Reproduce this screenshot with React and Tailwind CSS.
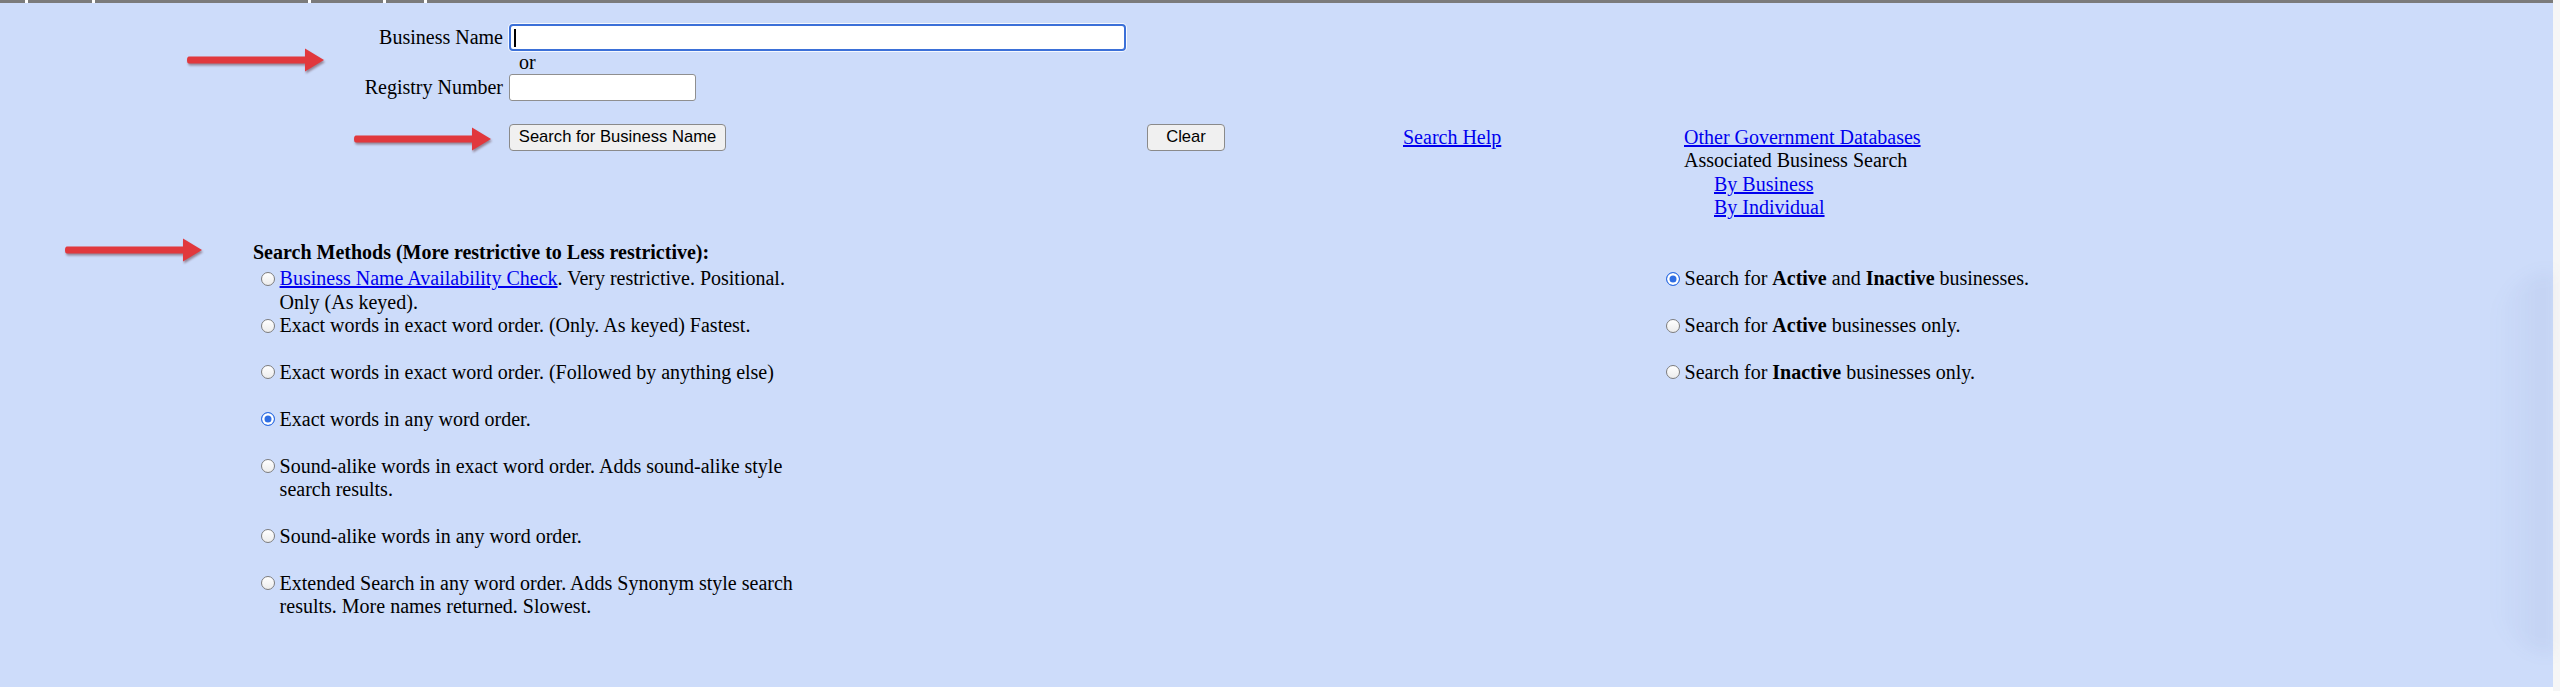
import React from "react";

const serif = "font-['Liberation_Serif','Times_New_Roman',serif]";
const sans = "font-['Liberation_Sans',Arial,sans-serif]";

function Arrow({ className }) {
  return (
    <svg
      className={`absolute w-[137px] h-[24px] drop-shadow-[1px_2px_1px_rgba(60,0,0,0.4)] ${className}`}
      viewBox="0 0 137 24"
    >
      <path d="M2 8.5 H118 V0.5 L137 12 L118 23.5 V15.5 H2 Q0 15.5 0 12 Q0 8.5 2 8.5 Z" fill="#e1383d" />
    </svg>
  );
}

function Radio({ checked }) {
  return (
    <span
      className={`block w-[14px] h-[14px] rounded-full border ${
        checked
          ? "border-[#2f6ee3] bg-[#2f6ee3] shadow-[inset_0_0_0_2.5px_#ffffff]"
          : "border-[#7d7d7d] bg-gradient-to-b from-white to-[#ececec]"
      }`}
    />
  );
}

function Option({ checked, gap, children }) {
  return (
    <div className={`flex items-start ${gap ? "mb-[23.4px]" : ""}`}>
      <div className="w-[18.6px] shrink-0 pt-[4.5px]">
        <Radio checked={checked} />
      </div>
      <div className="leading-[23.4px] whitespace-nowrap">{children}</div>
    </div>
  );
}

function Link({ children }) {
  return <a className="text-[#0000ee] underline cursor-pointer">{children}</a>;
}

export default function App() {
  const tabs = [25, 64, 213, 72, 38];

  return (
    <div className={`relative w-[2560px] h-[691px] bg-white flex overflow-hidden text-black text-[20px] ${serif}`}>
      <div className="w-[2553px] flex flex-col">
        <div className="h-[3px] flex gap-[3px] bg-white">
          {tabs.map((w, i) => (
            <div key={i} className="h-full bg-[#7b7b7b]" style={{ width: w }} />
          ))}
          <div className="h-full flex-1 bg-[#7b7b7b]" />
        </div>

        <div className="relative h-[684px] bg-[#cddcfa] pt-[21px]">
          {/* name / registry lookup */}
          <div className="grid grid-cols-[503px_auto] gap-x-[6px] leading-[23.4px]">
            <div className="self-center text-right">Business Name</div>
            <div className="w-[617px] h-[27px] border-2 border-[#3b70d8] rounded-[4px] bg-white flex items-center pl-[3px] shadow-[0_0_0_1px_rgba(255,255,255,0.8)]">
              <span className="block w-[2px] h-[18px] bg-black" />
            </div>

            <div />
            <div className="h-[23px] leading-[23px] pl-[10px]">or</div>

            <div className="self-center text-right">Registry Number</div>
            <div className="w-[187px] h-[27px] border border-[#8f8f8f] rounded-[3px] bg-white" />
          </div>

          <div className="mt-[23px] grid grid-cols-[503px_auto] gap-x-[6px] leading-[23.4px]">
            <div />
            <div className="flex items-start">
              <div className="w-[638px]">
                <button
                  type="button"
                  className={`w-[217px] h-[27px] border border-[#8a8a8a] rounded-[4px] bg-[#f0f0f0] text-[16.6px] leading-none ${sans}`}
                >
                  Search for Business Name
                </button>
              </div>
              <div className="w-[256px]">
                <button
                  type="button"
                  className={`w-[78px] h-[27px] border border-[#8a8a8a] rounded-[4px] bg-[#f0f0f0] text-[16.6px] leading-none ${sans}`}
                >
                  Clear
                </button>
              </div>
              <div className="w-[281px] pt-[2px]">
                <Link>Search Help</Link>
              </div>
              <div className="pt-[2px] flex flex-col items-start">
                <Link>Other Government Databases</Link>
                <div>Associated Business Search</div>
                <div className="pl-[30px] flex flex-col items-start">
                  <Link>By Business</Link>
                  <Link>By Individual</Link>
                </div>
              </div>
            </div>
          </div>

          {/* search methods */}
          <div className="mt-[21.7px] pl-[253px]">
            <div className="font-bold leading-[23.4px]">Search Methods (More restrictive to Less restrictive):</div>
            <div className="mt-[2.6px] flex items-start">
              <div className="ml-[8px] w-[1405px]">
                <Option>
                  <Link>Business Name Availability Check</Link>. Very restrictive. Positional.
                  <br />
                  Only (As keyed).
                </Option>
                <Option gap>Exact words in exact word order. (Only. As keyed) Fastest.</Option>
                <Option gap>Exact words in exact word order. (Followed by anything else)</Option>
                <Option gap checked>
                  Exact words in any word order.
                </Option>
                <Option gap>
                  Sound-alike words in exact word order. Adds sound-alike style
                  <br />
                  search results.
                </Option>
                <Option gap>Sound-alike words in any word order.</Option>
                <Option>
                  Extended Search in any word order. Adds Synonym style search
                  <br />
                  results. More names returned. Slowest.
                </Option>
              </div>
              <div>
                <Option gap checked>
                  Search for <b>Active</b> and <b>Inactive</b> businesses.
                </Option>
                <Option gap>
                  Search for <b>Active</b> businesses only.
                </Option>
                <Option>
                  Search for <b>Inactive</b> businesses only.
                </Option>
              </div>
            </div>
          </div>

          <Arrow className="left-[187px] top-[45px]" />
          <Arrow className="left-[354px] top-[124px]" />
          <Arrow className="left-[65px] top-[235px]" />

          <div className="absolute right-0 top-[270px] h-[380px] w-[60px] rounded-l-full bg-gradient-to-l from-[rgba(60,80,140,0.07)] to-transparent blur-[8px]" />
        </div>
      </div>
      <div className="flex-1 bg-[#f6f6f6]" />
    </div>
  );
}
